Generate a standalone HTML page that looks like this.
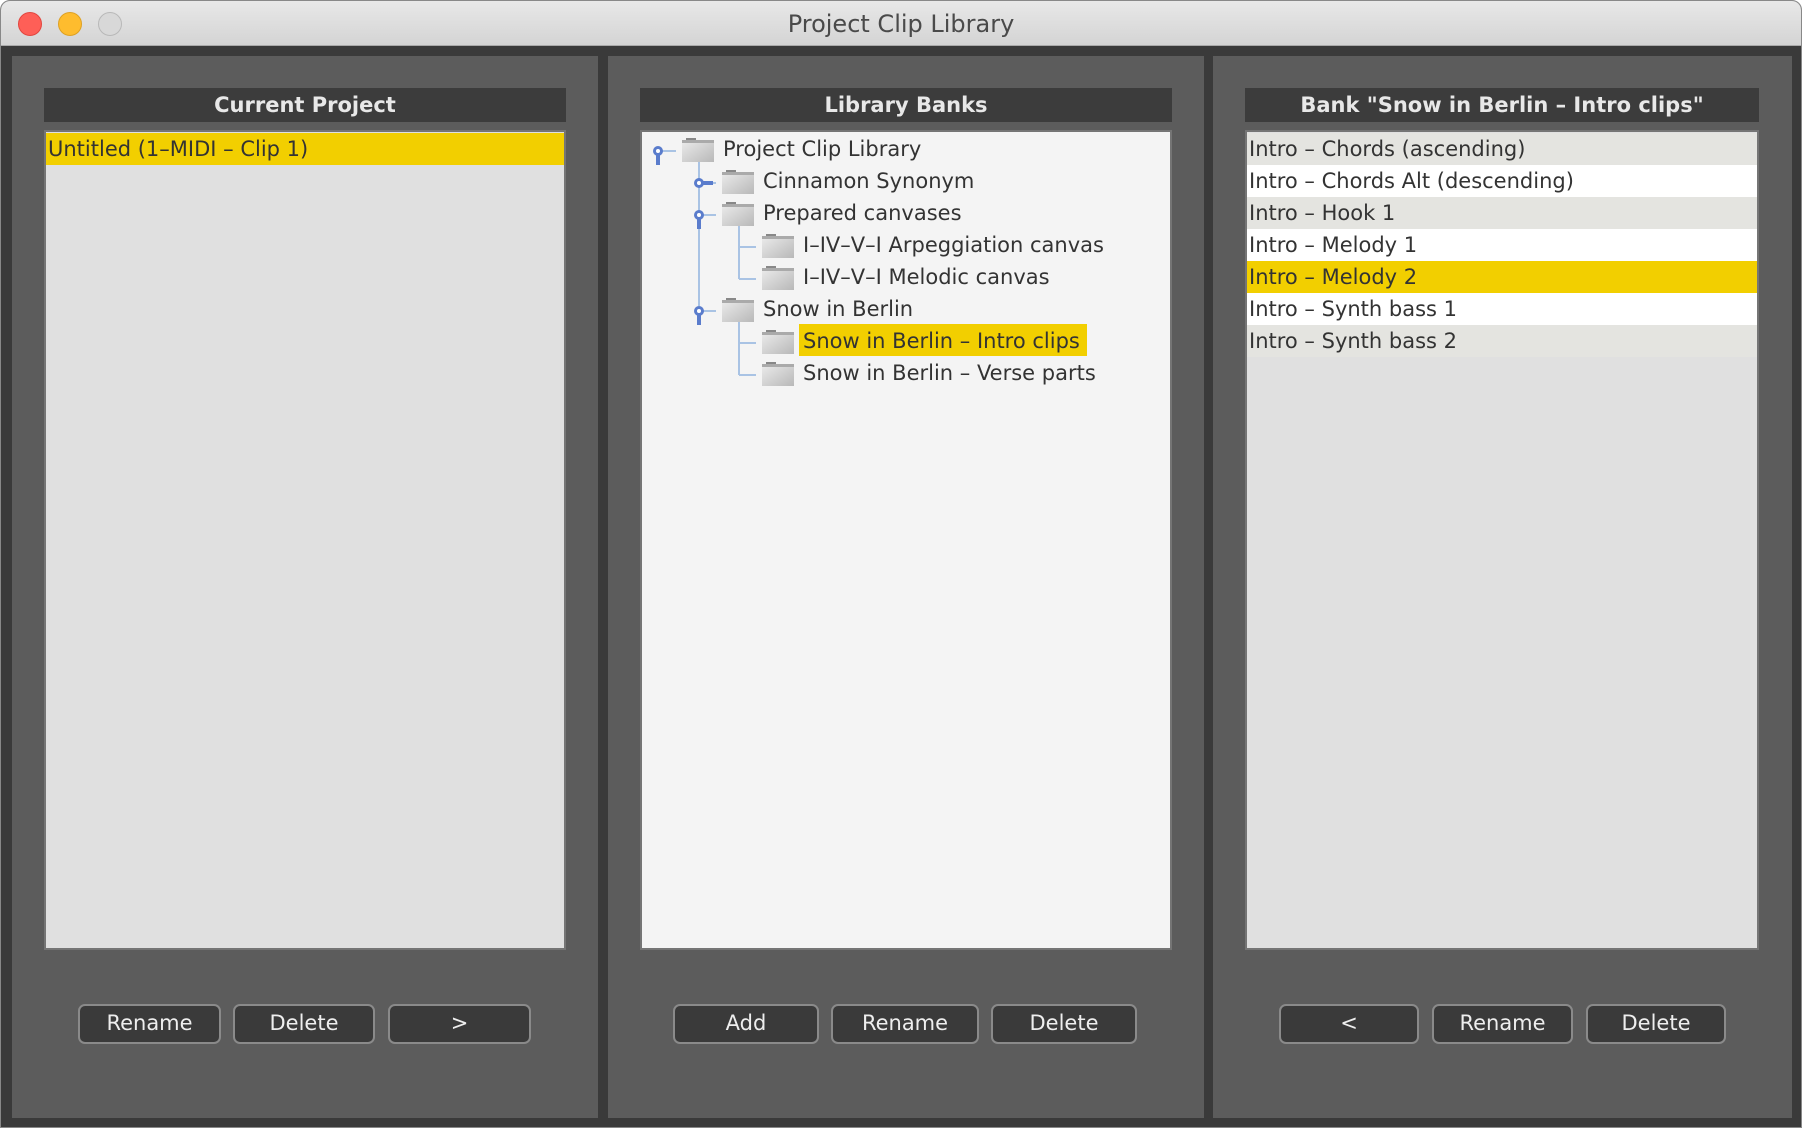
<!DOCTYPE html>
<html><head><meta charset="utf-8"><style>
*{margin:0;padding:0;box-sizing:border-box}
body{width:1802px;height:1128px;background:#fff;font-family:"DejaVu Sans","Liberation Sans",sans-serif;overflow:hidden;position:relative}
.win{position:absolute;left:0;top:0;width:1802px;height:1128px;background:#3a3a3a;border-radius:10px 10px 0 0;overflow:hidden;border:1px solid #888}
.tb{position:absolute;left:0;top:0;width:100%;height:45px;background:linear-gradient(#e8e8e8,#d4d4d4);border-bottom:1px solid #aaa;text-align:center;font-size:24px;line-height:46px;color:#4a4a4a}
.dot{position:absolute;top:11px;width:24px;height:24px;border-radius:50%}
.panel{position:absolute;top:55px;height:1062px;background:#5c5c5c}
.hd{position:absolute;top:87px;height:34px;background:#3c3c3c;color:#e8e8e8;font-weight:bold;font-size:21px;text-align:center;line-height:34px}
.list{position:absolute;top:129px;height:820px;border:2px solid #757575}
.row{position:absolute;left:0;right:0;height:32px;font-size:21px;line-height:32px;color:#333;padding-left:2px;white-space:nowrap}
.btn{position:absolute;top:1003px;height:40px;background:#3a3a3a;border:2px solid #8a8a8a;border-radius:7px;color:#eee;font-size:21px;text-align:center;line-height:35px}
.t{position:absolute;font-size:21px;line-height:32px;color:#333;white-space:nowrap}
.fd{position:absolute;width:32px;height:24px}
</style></head><body>
<div class="win">
<div class="tb">Project Clip Library
<div class="dot" style="left:17px;background:#fe5f57;border:1px solid #e2463f"></div>
<div class="dot" style="left:57px;background:#febc2e;border:1px solid #dea123"></div>
<div class="dot" style="left:97px;background:#d8d8d8;border:1px solid #b8b8b8"></div>
</div>

<div class="panel" style="left:11px;width:586px"></div>
<div class="panel" style="left:607px;width:596px"></div>
<div class="panel" style="left:1212px;width:579px"></div>

<div class="hd" style="left:43px;width:522px">Current Project</div>
<div class="hd" style="left:639px;width:532px">Library Banks</div>
<div class="hd" style="left:1244px;width:514px">Bank "Snow in Berlin – Intro clips"</div>

<div class="list" style="left:43px;width:522px;background:#e0e0e0">
<div class="row" style="top:1px;background:#f2cf00">Untitled (1–MIDI – Clip 1)</div>
</div>

<div class="list" style="left:639px;width:532px;background:#f4f4f4">
<svg width="528" height="260" style="position:absolute;left:0;top:0">
<g stroke="#a9c3e4" stroke-width="2" fill="none">
<line x1="20" y1="19" x2="34" y2="19"/>
<line x1="57" y1="22" x2="57" y2="174"/>
<line x1="60" y1="51" x2="74" y2="51"/><line x1="60" y1="83" x2="74" y2="83"/><line x1="60" y1="179" x2="74" y2="179"/>
<line x1="97" y1="90" x2="97" y2="147"/><line x1="97" y1="115" x2="114" y2="115"/><line x1="97" y1="147" x2="114" y2="147"/>
<line x1="97" y1="186" x2="97" y2="243"/><line x1="97" y1="211" x2="114" y2="211"/><line x1="97" y1="243" x2="114" y2="243"/>
</g>
<g fill="#5a7ccc">
<circle cx="16" cy="19" r="5"/><rect x="14" y="19" width="4" height="14"/>
<circle cx="57" cy="51" r="5"/><rect x="57" y="49" width="14" height="4"/>
<circle cx="57" cy="83" r="5"/><rect x="55" y="83" width="4" height="14"/>
<circle cx="57" cy="179" r="5"/><rect x="55" y="179" width="4" height="14"/>
</g>
<g fill="#fff"><circle cx="16" cy="19" r="2"/><circle cx="57" cy="51" r="2"/><circle cx="57" cy="83" r="2"/><circle cx="57" cy="179" r="2"/></g>
</svg>
<div style="position:absolute;left:157px;top:192px;width:288px;height:32px;background:#f2cf00"></div>
<div class="fd" style="left:40px;top:6px"><svg width="32" height="24"><defs><linearGradient id="g" x1="0" y1="0" x2="1" y2="1"><stop offset="0" stop-color="#ececec"/><stop offset="1" stop-color="#b8b8b8"/></linearGradient></defs><rect x="4" y="0" width="10" height="3" fill="#888"/><rect x="0" y="2" width="32" height="22" fill="url(#g)"/><rect x="0" y="2" width="32" height="3" fill="#aaa"/></svg></div>
<div class="fd" style="left:80px;top:38px"><svg width="32" height="24"><rect x="4" y="0" width="10" height="3" fill="#888"/><rect x="0" y="2" width="32" height="22" fill="url(#g)"/><rect x="0" y="2" width="32" height="3" fill="#aaa"/></svg></div>
<div class="fd" style="left:80px;top:70px"><svg width="32" height="24"><rect x="4" y="0" width="10" height="3" fill="#888"/><rect x="0" y="2" width="32" height="22" fill="url(#g)"/><rect x="0" y="2" width="32" height="3" fill="#aaa"/></svg></div>
<div class="fd" style="left:120px;top:102px"><svg width="32" height="24"><rect x="4" y="0" width="10" height="3" fill="#888"/><rect x="0" y="2" width="32" height="22" fill="url(#g)"/><rect x="0" y="2" width="32" height="3" fill="#aaa"/></svg></div>
<div class="fd" style="left:120px;top:134px"><svg width="32" height="24"><rect x="4" y="0" width="10" height="3" fill="#888"/><rect x="0" y="2" width="32" height="22" fill="url(#g)"/><rect x="0" y="2" width="32" height="3" fill="#aaa"/></svg></div>
<div class="fd" style="left:80px;top:166px"><svg width="32" height="24"><rect x="4" y="0" width="10" height="3" fill="#888"/><rect x="0" y="2" width="32" height="22" fill="url(#g)"/><rect x="0" y="2" width="32" height="3" fill="#aaa"/></svg></div>
<div class="fd" style="left:120px;top:198px"><svg width="32" height="24"><rect x="4" y="0" width="10" height="3" fill="#888"/><rect x="0" y="2" width="32" height="22" fill="url(#g)"/><rect x="0" y="2" width="32" height="3" fill="#aaa"/></svg></div>
<div class="fd" style="left:120px;top:230px"><svg width="32" height="24"><rect x="4" y="0" width="10" height="3" fill="#888"/><rect x="0" y="2" width="32" height="22" fill="url(#g)"/><rect x="0" y="2" width="32" height="3" fill="#aaa"/></svg></div>
<div class="t" style="left:81px;top:1px">Project Clip Library</div>
<div class="t" style="left:121px;top:33px">Cinnamon Synonym</div>
<div class="t" style="left:121px;top:65px">Prepared canvases</div>
<div class="t" style="left:161px;top:97px">I–IV–V–I Arpeggiation canvas</div>
<div class="t" style="left:161px;top:129px">I–IV–V–I Melodic canvas</div>
<div class="t" style="left:121px;top:161px">Snow in Berlin</div>
<div class="t" style="left:161px;top:193px">Snow in Berlin – Intro clips</div>
<div class="t" style="left:161px;top:225px">Snow in Berlin – Verse parts</div>
</div>

<div class="list" style="left:1244px;width:514px;background:#e0e0e0">
<div class="row" style="top:1px;background:#e4e4e0">Intro – Chords (ascending)</div>
<div class="row" style="top:33px;background:#fff">Intro – Chords Alt (descending)</div>
<div class="row" style="top:65px;background:#e4e4e0">Intro – Hook 1</div>
<div class="row" style="top:97px;background:#fff">Intro – Melody 1</div>
<div class="row" style="top:129px;background:#f2cf00">Intro – Melody 2</div>
<div class="row" style="top:161px;background:#fff">Intro – Synth bass 1</div>
<div class="row" style="top:193px;background:#e4e4e0">Intro – Synth bass 2</div>
</div>

<div class="btn" style="left:77px;width:143px">Rename</div>
<div class="btn" style="left:232px;width:142px">Delete</div>
<div class="btn" style="left:387px;width:143px">&gt;</div>
<div class="btn" style="left:672px;width:146px">Add</div>
<div class="btn" style="left:830px;width:148px">Rename</div>
<div class="btn" style="left:990px;width:146px">Delete</div>
<div class="btn" style="left:1278px;width:140px">&lt;</div>
<div class="btn" style="left:1431px;width:141px">Rename</div>
<div class="btn" style="left:1585px;width:140px">Delete</div>
</div>
</body></html>
